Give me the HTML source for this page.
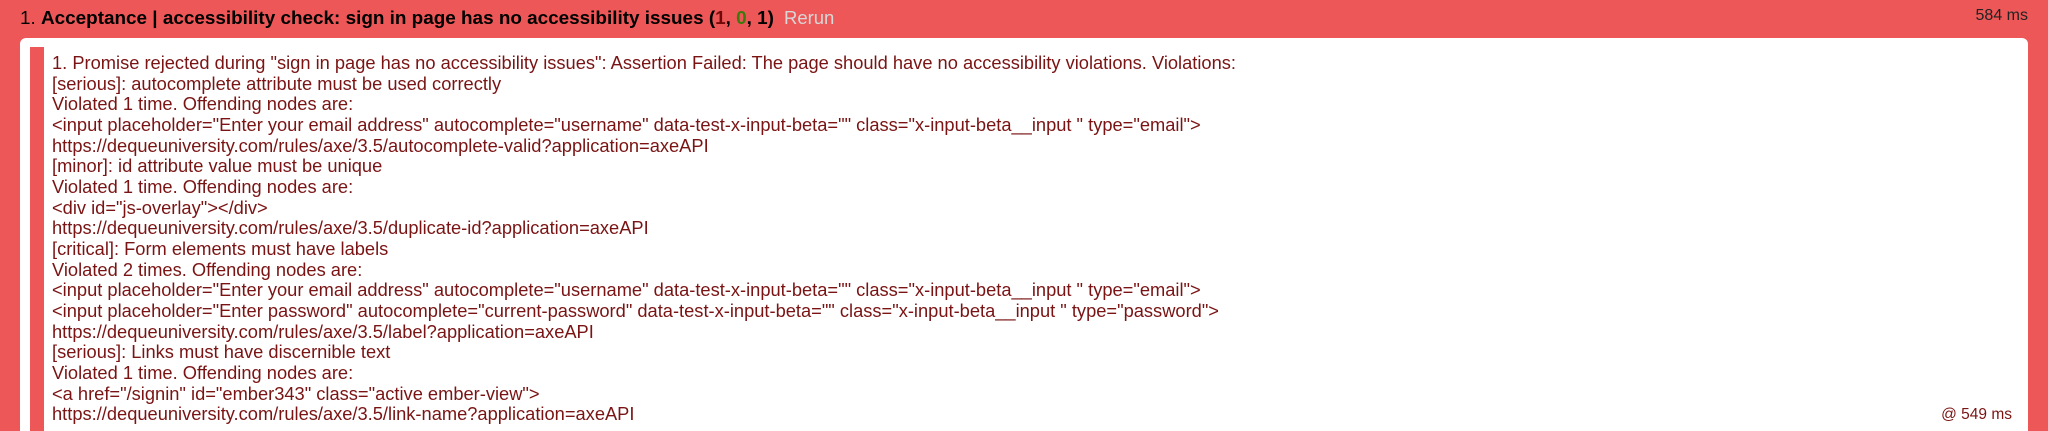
<!DOCTYPE html>
<html><head><meta charset="utf-8"><style>
html,body{margin:0;padding:0;background:#EE5757;width:2048px;height:431px;overflow:hidden;font-family:"Liberation Sans",sans-serif}
body{position:relative}
.hdr{position:absolute;left:20px;top:7px;font-size:18.9px;color:#000;white-space:nowrap;line-height:22px}
.hdr b{font-weight:bold}
.hdr .r{color:#710909}.hdr .g{color:#3C7A0C}
.hdr .rerun{color:#d8d8d8;margin-left:10px;font-size:18.5px}
.time{position:absolute;right:20px;top:7px;font-size:16px;color:#222}
.box{position:absolute;left:20px;top:38px;width:2008px;height:393px;background:#fff;border-radius:6px 6px 0 0;overflow:hidden}
.bar{position:absolute;left:10px;top:9px;width:14px;height:384px;background:#EE5757}
.txt{position:absolute;left:32px;top:15px;font-size:18.3px;line-height:20.65px;color:#7a1414;white-space:pre}
.at{position:absolute;right:16px;top:368px;font-size:15.5px;color:#7a1414}
</style></head><body>
<div class="hdr">1. <b>Acceptance | accessibility check: sign in page has no accessibility issues (<span class="r">1</span>, <span class="g">0</span>, 1)</b><span class="rerun">Rerun</span></div>
<div class="time">584 ms</div>
<div class="box"><div class="bar"></div>
<div class="txt">1. Promise rejected during "sign in page has no accessibility issues": Assertion Failed: The page should have no accessibility violations. Violations:
[serious]: autocomplete attribute must be used correctly
Violated 1 time. Offending nodes are:
&lt;input placeholder="Enter your email address" autocomplete="username" data-test-x-input-beta="" class="x-input-beta__input " type="email"&gt;
https://dequeuniversity.com/rules/axe/3.5/autocomplete-valid?application=axeAPI
[minor]: id attribute value must be unique
Violated 1 time. Offending nodes are:
&lt;div id="js-overlay"&gt;&lt;/div&gt;
https://dequeuniversity.com/rules/axe/3.5/duplicate-id?application=axeAPI
[critical]: Form elements must have labels
Violated 2 times. Offending nodes are:
&lt;input placeholder="Enter your email address" autocomplete="username" data-test-x-input-beta="" class="x-input-beta__input " type="email"&gt;
&lt;input placeholder="Enter password" autocomplete="current-password" data-test-x-input-beta="" class="x-input-beta__input " type="password"&gt;
https://dequeuniversity.com/rules/axe/3.5/label?application=axeAPI
[serious]: Links must have discernible text
Violated 1 time. Offending nodes are:
&lt;a href="/signin" id="ember343" class="active ember-view"&gt;
https://dequeuniversity.com/rules/axe/3.5/link-name?application=axeAPI</div>
<div class="at">@ 549 ms</div>
</div>
</body></html>
